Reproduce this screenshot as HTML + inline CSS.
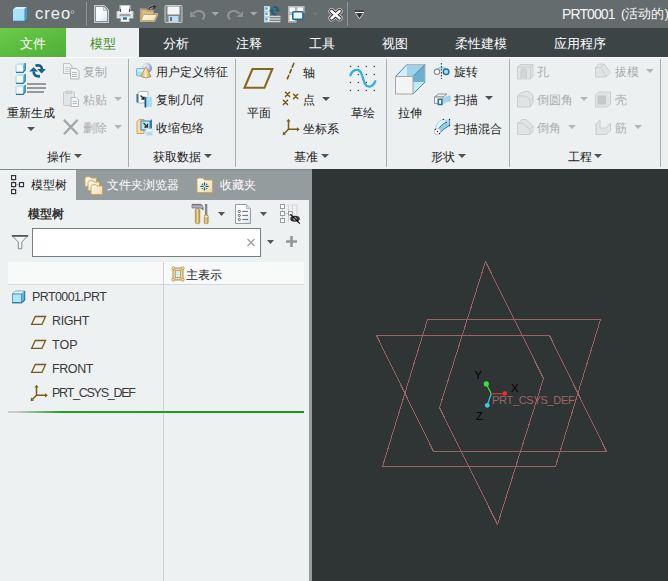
<!DOCTYPE html>
<html><head><meta charset="utf-8">
<style>
*{margin:0;padding:0;box-sizing:border-box}
html,body{width:668px;height:581px;overflow:hidden;background:#2f3535;font-family:"Liberation Sans",sans-serif;position:relative}
.a{position:absolute}
svg{position:absolute;overflow:visible}
#title{left:0;top:0;width:668px;height:28px;background:#656c6d;}
#tabs{left:0;top:28px;width:668px;height:29px;background:#3c4446;}
#ribbon{left:0;top:57px;width:668px;height:112px;background:#edf0f1;border-top:1px solid #fbfcfc;}
.sep{position:absolute;top:59px;width:1px;height:108px;background:#a9aeaf;}
.tab{position:absolute;top:28px;height:29px;color:#fff;font-size:13px;line-height:31px;text-align:center;}
.t{position:absolute;white-space:nowrap;font-size:12px;color:#222;line-height:14px;height:14px}
.dis{color:#a9abac}
.tri{position:absolute;width:0;height:0;border-left:4px solid transparent;border-right:4px solid transparent;border-top:4px solid #505050;}
.tri.d{border-top-color:#b4b6b7}
#hline{left:0;top:169px;width:312px;height:1px;background:#7f8a8b}
#ptabs{left:0;top:170px;width:312px;height:411px;background:#959c9e;}
#panel{left:0;top:200px;width:309px;height:381px;background:#edf1f2;}
#gfx{left:312px;top:170px;width:356px;height:411px;background:#2f3535;}
.tree{position:absolute;font-size:12.5px;color:#3a3a3a;line-height:14px;white-space:nowrap}
</style></head><body>
<!-- title bar -->
<div id="title" class="a"></div>
<div class="a" style="left:562px;top:6px;font-size:14px;color:#f4f6f6;white-space:nowrap;line-height:16px"><span style="letter-spacing:-0.9px">PRT0001</span><span style="position:absolute;left:59px;top:0;font-size:13.2px">(活动的)</span></div>
<!-- tabs -->
<div id="tabs" class="a"></div>
<div class="a" style="left:0;top:28px;width:66px;height:29px;background:linear-gradient(160deg,#6ccb4a 0%,#5bbd3f 50%,#4fae38 100%)"></div>
<div class="a" style="left:66px;top:28px;width:73px;height:29px;background:#edf0f1"></div>
<div class="tab" style="left:0;width:66px;">文件</div>
<div class="tab" style="left:66px;width:73px;color:#3f8a1c">模型</div>
<div class="tab" style="left:139px;width:73px;">分析</div>
<div class="tab" style="left:212px;width:73px;">注释</div>
<div class="tab" style="left:285px;width:73px;">工具</div>
<div class="tab" style="left:358px;width:73px;">视图</div>
<div class="tab" style="left:431px;width:100px;">柔性建模</div>
<div class="tab" style="left:531px;width:97px;">应用程序</div>

<!-- ribbon -->
<div id="ribbon" class="a"></div>
<div class="sep" style="left:128px"></div>
<div class="sep" style="left:235px"></div>
<div class="sep" style="left:386px"></div>
<div class="sep" style="left:509px"></div>
<div class="sep" style="left:660px"></div>

<!-- group 1 -->
<div class="t" style="left:7px;top:106px">重新生成</div>
<div class="tri" style="left:27px;top:127px"></div>
<div class="t dis" style="left:83px;top:65px">复制</div>
<div class="t dis" style="left:83px;top:93px">粘贴</div>
<div class="tri d" style="left:114px;top:97px"></div>
<div class="t dis" style="left:83px;top:121px">删除</div>
<div class="tri d" style="left:114px;top:125px"></div>
<div class="t" style="left:47px;top:150px">操作</div>
<div class="tri" style="left:74px;top:154px"></div>

<!-- group 2 -->
<div class="t" style="left:156px;top:65px">用户定义特征</div>
<div class="t" style="left:156px;top:93px">复制几何</div>
<div class="t" style="left:156px;top:121px">收缩包络</div>
<div class="t" style="left:153px;top:150px">获取数据</div>
<div class="tri" style="left:204px;top:154px"></div>

<!-- group 3 -->
<div class="t" style="left:247px;top:106px">平面</div>
<div class="t" style="left:303px;top:66px">轴</div>
<div class="t" style="left:303px;top:93px">点</div>
<div class="tri" style="left:322px;top:97px"></div>
<div class="t" style="left:303px;top:122px">坐标系</div>
<div class="t" style="left:351px;top:106px">草绘</div>
<div class="t" style="left:294px;top:150px">基准</div>
<div class="tri" style="left:321px;top:154px"></div>

<!-- group 4 -->
<div class="t" style="left:398px;top:106px">拉伸</div>
<div class="t" style="left:454px;top:65px">旋转</div>
<div class="t" style="left:454px;top:93px">扫描</div>
<div class="tri" style="left:485px;top:96px"></div>
<div class="t" style="left:454px;top:122px">扫描混合</div>
<div class="t" style="left:431px;top:150px">形状</div>
<div class="tri" style="left:458px;top:154px"></div>

<!-- group 5 -->
<div class="t dis" style="left:537px;top:65px">孔</div>
<div class="t dis" style="left:537px;top:93px">倒圆角</div>
<div class="tri d" style="left:580px;top:97px"></div>
<div class="t dis" style="left:537px;top:121px">倒角</div>
<div class="tri d" style="left:568px;top:125px"></div>
<div class="t dis" style="left:615px;top:65px">拔模</div>
<div class="tri d" style="left:646px;top:69px"></div>
<div class="t dis" style="left:615px;top:93px">壳</div>
<div class="t dis" style="left:615px;top:121px">筋</div>
<div class="tri d" style="left:634px;top:125px"></div>
<div class="t" style="left:568px;top:150px">工程</div>
<div class="tri" style="left:594px;top:154px"></div>

<!-- left panel -->
<div id="hline" class="a"></div>
<div id="ptabs" class="a"></div>
<div class="a" style="left:0;top:170px;width:76px;height:30px;background:#edf1f2"></div>
<div id="panel" class="a"></div>
<div class="t" style="left:31px;top:178px;font-size:12px;color:#222">模型树</div>
<div class="t" style="left:107px;top:178px;font-size:12px;color:#fff">文件夹浏览器</div>
<div class="t" style="left:220px;top:178px;font-size:12px;color:#fff">收藏夹</div>
<div class="t" style="left:28px;top:207px;font-size:12px;color:#333;font-weight:bold">模型树</div>
<div class="a" style="left:32px;top:228px;width:229px;height:29px;background:#fff;border:1px solid #778081"></div>

<div class="a" style="left:8px;top:262px;width:296px;height:23px;background:#f8f9f9;border-bottom:1px solid #d5d8d9"></div>
<div class="a" style="left:163px;top:262px;width:1px;height:319px;background:#cfd3d4"></div>
<div class="t" style="left:186px;top:268px;font-size:12px;color:#222">主表示</div>

<div class="tree" style="left:32px;top:290px;letter-spacing:-0.6px">PRT0001.PRT</div>
<div class="tree" style="left:52px;top:314px;letter-spacing:-0.4px">RIGHT</div>
<div class="tree" style="left:52px;top:338px">TOP</div>
<div class="tree" style="left:52px;top:362px;letter-spacing:-0.4px">FRONT</div>
<div class="tree" style="left:52px;top:386px;letter-spacing:-1.25px">PRT_CSYS_DEF</div>
<div class="a" style="left:8px;top:411px;width:296px;height:2px;background:linear-gradient(90deg,#c9c9c9 0%,#c9c9c9 3%,#24a024 18%,#1a961a 100%)"></div>

<!-- graphics -->
<div id="gfx" class="a"></div>

<svg width="668" height="581" style="left:0;top:0" viewBox="0 0 668 581">
<defs>
<linearGradient id="gDoc" x1="0" y1="0" x2="1" y2="1"><stop offset="0" stop-color="#ffffff"/><stop offset="0.6" stop-color="#f4f8fa"/><stop offset="1" stop-color="#cfe3ee"/></linearGradient>
<linearGradient id="gFold" x1="0" y1="0" x2="1" y2="1"><stop offset="0" stop-color="#fffdf6"/><stop offset="1" stop-color="#f2d9a4"/></linearGradient>
<linearGradient id="gTan" x1="0" y1="0" x2="1" y2="0"><stop offset="0" stop-color="#b88f3c"/><stop offset="0.45" stop-color="#f0d890"/><stop offset="1" stop-color="#b08838"/></linearGradient>
<linearGradient id="gSteel" x1="0" y1="0" x2="0" y2="1"><stop offset="0" stop-color="#6a6c74"/><stop offset="0.45" stop-color="#c4c5cc"/><stop offset="1" stop-color="#50525a"/></linearGradient>
<radialGradient id="gSph" cx="0.35" cy="0.35" r="0.7"><stop offset="0" stop-color="#ffffff"/><stop offset="0.5" stop-color="#c4c8f0"/><stop offset="1" stop-color="#7f88cc"/></radialGradient>
<linearGradient id="gCone" x1="0" y1="0" x2="1" y2="0"><stop offset="0" stop-color="#c8a860"/><stop offset="0.45" stop-color="#fbeac0"/><stop offset="1" stop-color="#c09a50"/></linearGradient>
</defs>

<!-- ===== TITLE BAR ===== -->
<!-- creo cube -->
<g>
<polygon points="13.5,9 16,7 27,7 24.5,9" fill="#d8f2fb"/>
<polygon points="24.5,9 27,7 27,19 24.5,21" fill="#3a9ccc"/>
<rect x="13" y="9" width="11.5" height="12" fill="#a9e1f6"/>
<path d="M13 21.2 H24.5 L27 19" stroke="#2c86b6" stroke-width="1" fill="none"/>
</g>
<text x="35" y="19" font-family="Liberation Sans" font-size="16.5" fill="#f2f4f4" letter-spacing="1">creo</text>
<circle cx="72.5" cy="12" r="1.5" fill="none" stroke="#c8cccc" stroke-width="0.7"/>
<rect x="86" y="2" width="1" height="24" fill="#8d9394"/>

<!-- new -->
<path d="M94.5 5.5 H104.5 L108.5 9.5 V22.5 H94.5 Z" fill="#8a9091" stroke="#c9cccc" stroke-width="1"/>
<path d="M96 7 H103.8 L107 10.2 V21 H96 Z" fill="url(#gDoc)"/>
<path d="M103.5 7 V10.5 H107" fill="#cfe6f0" stroke="#9fb8c4" stroke-width="0.8"/>
<!-- print -->
<g>
<path d="M119.5 5 H130.5 V11 H133.5 V18.5 H129.5 V22 H120.5 V18.5 H116.5 V11 H119.5 Z" fill="#c4c8c8"/>
<rect x="117.5" y="11.5" width="15" height="6.5" fill="#e6e8e8"/>
<rect x="121" y="6" width="8" height="6" fill="#ffffff"/>
<path d="M120.6 9 V12 M129.4 9 V12" stroke="#2e3233" stroke-width="0.9"/>
<rect x="118" y="12.2" width="14" height="1.6" fill="#f4f4f4"/>
<rect x="119.5" y="13.8" width="11" height="2.4" fill="#a3a6a7"/>
<rect x="118" y="16.2" width="14" height="0.9" fill="#b9dcec"/>
<rect x="121.5" y="17" width="7" height="4.3" fill="#ffffff"/>
<rect x="123" y="17.3" width="4" height="2.4" fill="#1f6d9c"/>
</g>
<!-- open folder -->
<g>
<path d="M140.5 9 H145.5 L147 10.5 H153 V13.5 H157.5 V15 L154.5 21.5 H140.5 Z" fill="none" stroke="#aeb3b3" stroke-width="1.2"/>
<path d="M141 9.5 H145.5 L147 11 H153.5 V20.8 H141 Z" fill="#dcbb78" stroke="#b8944c" stroke-width="0.9"/>
<path d="M143.5 14.5 H157 L154.3 20.8 H141 Z" fill="url(#gFold)" stroke="#c49e55" stroke-width="0.9"/>
<path d="M148.8 9.5 Q149.5 6.3 153.5 6.8" stroke="#c6caca" stroke-width="2.6" fill="none"/>
<path d="M148.8 9.5 Q149.5 6.3 153.5 6.8" stroke="#2b3236" stroke-width="1.4" fill="none"/>
<polygon points="153,5 156.6,6.2 153.5,9.6" fill="#2b3236"/>
</g>
<!-- save -->
<g>
<rect x="165" y="5.5" width="17" height="17" rx="1" fill="#7e8384" stroke="#c4c8c8" stroke-width="1"/>
<rect x="167.5" y="6.5" width="12" height="8" fill="#f4f4f4"/>
<rect x="168.5" y="16" width="10" height="6" fill="#b8dff0"/>
<rect x="170" y="17" width="2" height="4" fill="#6d7476"/>
</g>
<!-- undo -->
<path d="M193 13.5 Q198 9 203 12.5 Q206 16 202.5 19.5" stroke="#8d9293" stroke-width="2.2" fill="none"/>
<polygon points="190,11 196.5,17 190,17" fill="#8d9293"/>
<polygon points="211.5,12 219,12 215.25,15.8" fill="#a4a9aa"/>
<!-- redo -->
<path d="M239.5 13.5 Q234.5 9 229.5 12.5 Q226.5 16 230 19.5" stroke="#8d9293" stroke-width="2.2" fill="none"/>
<polygon points="243,11 236.5,17 243,17" fill="#8d9293"/>
<polygon points="250,12 257.5,12 253.75,15.8" fill="#a4a9aa"/>
<!-- regen small -->
<g>
<rect x="264.5" y="6.5" width="5" height="4.6" fill="#fff" stroke="#c8cccc" stroke-width="1"/>
<rect x="264.5" y="11.9" width="5" height="4.6" fill="#fff" stroke="#c8cccc" stroke-width="1"/>
<rect x="264.5" y="17.3" width="5" height="4.6" fill="#fff" stroke="#c8cccc" stroke-width="1"/>
<rect x="265.3" y="7.3" width="2.4" height="2.4" fill="#2ea8e8"/>
<rect x="265.3" y="12.7" width="2.4" height="2.4" fill="#2ea8e8"/>
<rect x="265.3" y="18.1" width="2.4" height="2.4" fill="#2ea8e8"/>
<path d="M270 16.5 H280.5 M270 19 H280.5 M270 21.5 H280.5" stroke="#d4d8d8" stroke-width="1.3"/>
<g transform="translate(249.14,-37.46) scale(0.68)">
<path d="M35.5 65.6 Q42 64.2 41.9 69.5" stroke="#14628a" stroke-width="2.9" fill="none"/>
<polygon points="37.2,69 46,69 41.6,73.4" fill="#14628a"/>
<path d="M40 76.2 Q33.6 77 33.7 71.5" stroke="#14628a" stroke-width="2.9" fill="none"/>
<polygon points="29.2,71.6 38,71.6 33.6,67.2" fill="#14628a"/>
</g>
</g>
<!-- windows -->
<g>
<path d="M288 6 H304.5 V13 H296.5 V22.5 H288 Z" fill="#c6caca"/>
<rect x="289" y="7" width="6.5" height="5.5" fill="#f6f6f6" stroke="#8e9293" stroke-width="0.6"/>
<rect x="297" y="7" width="6.5" height="5.5" fill="#f6f6f6" stroke="#8e9293" stroke-width="0.6"/>
<rect x="289" y="14.5" width="6.5" height="7" fill="#f6f6f6" stroke="#8e9293" stroke-width="0.6"/>
<rect x="292.8" y="11.8" width="10.2" height="7.6" rx="1.2" fill="#eef4f7" stroke="#1c6c98" stroke-width="1.6"/>
</g>
<polygon points="312,12.7 318.6,12.7 315.3,15.7" fill="#727879"/>
<!-- close x -->
<path d="M331.5 11.2 L339.5 18.2 M339.5 11.2 L331.5 18.2" stroke="#d0d2cc" stroke-width="6.2" stroke-linecap="round"/>
<path d="M331.5 11.2 L339.5 18.2 M339.5 11.2 L331.5 18.2" stroke="#252525" stroke-width="4.6" stroke-linecap="round"/>
<path d="M331.5 11.2 L339.5 18.2 M339.5 11.2 L331.5 18.2" stroke="#ffffff" stroke-width="2.8" stroke-linecap="round"/>
<rect x="347" y="2" width="1" height="24" fill="#8d9394"/>
<rect x="355" y="10.5" width="9" height="1.2" fill="#2e2e2e"/>
<rect x="355" y="12" width="9" height="1.3" fill="#ffffff"/>
<polygon points="356,13.3 363,13.3 359.5,18.2" fill="#2e2e2e"/>
<path d="M356 14 L359.5 18.8 L363 14" stroke="#dcdede" stroke-width="0.9" fill="none"/>

<!-- ===== RIBBON ICONS ===== -->
<!-- regenerate big -->
<g>
<polygon points="16,65 18,63 25,63 23,65" fill="#b4e6f8"/>
<polygon points="23,65 25,63 25,70 23,72" fill="#6fbde2"/>
<rect x="16" y="65" width="7" height="7" fill="#effaff"/>
<path d="M16 65 V72" stroke="#b6babb" stroke-width="0.8"/>
<path d="M16 72.3 H23 L25.2 70 V63" stroke="#1d79ad" stroke-width="1.2" fill="none"/>
</g>
<g transform="translate(0,11)">
<polygon points="16,65 18,63 25,63 23,65" fill="#b4e6f8"/>
<polygon points="23,65 25,63 25,70 23,72" fill="#6fbde2"/>
<rect x="16" y="65" width="7" height="7" fill="#effaff"/>
<path d="M16 65 V72" stroke="#b6babb" stroke-width="0.8"/>
<path d="M16 72.3 H23 L25.2 70 V63" stroke="#1d79ad" stroke-width="1.2" fill="none"/>
</g>
<g transform="translate(0,22)">
<polygon points="16,65 18,63 25,63 23,65" fill="#b4e6f8"/>
<polygon points="23,65 25,63 25,70 23,72" fill="#6fbde2"/>
<rect x="16" y="65" width="7" height="7" fill="#effaff"/>
<path d="M16 65 V72" stroke="#b6babb" stroke-width="0.8"/>
<path d="M16 72.3 H23 L25.2 70 V63" stroke="#1d79ad" stroke-width="1.2" fill="none"/>
</g>
<path d="M35.5 65.6 Q42 64.2 41.9 69.5" stroke="#14628a" stroke-width="2.7" fill="none"/>
<polygon points="37.2,69 46,69 41.6,73.4" fill="#14628a"/>
<path d="M40 76.2 Q33.6 77 33.7 71.5" stroke="#14628a" stroke-width="2.7" fill="none"/>
<polygon points="29.2,71.6 38,71.6 33.6,67.2" fill="#14628a"/>
<rect x="27" y="83" width="19" height="2" fill="#989898"/>
<rect x="27" y="87" width="19" height="2" fill="#989898"/>
<rect x="27" y="91" width="17" height="2" fill="#989898"/>

<!-- copy (disabled) -->
<path d="M63.5 63.5 H69.5 L72 66 V73.5 H63.5 Z" fill="#f1f2f2" stroke="#c0c2c2" stroke-width="1"/>
<path d="M65 67.5 H70 M65 69.5 H70 M65 71.5 H70" stroke="#c4c6c6" stroke-width="0.8"/>
<path d="M70.5 68.5 H76.5 L79 71 V79 H70.5 Z" fill="#f4f5f5" stroke="#b6b8b8" stroke-width="1"/>
<path d="M72 72.5 H77 M72 74.5 H77 M72 76.5 H77" stroke="#b4b6b6" stroke-width="0.9"/>
<!-- paste -->
<rect x="63.5" y="92" width="11" height="13.5" rx="1" fill="#e4e5e5" stroke="#c8caca" stroke-width="1"/>
<rect x="66.5" y="91" width="5" height="2.5" fill="#d6d8d8" stroke="#c4c6c6" stroke-width="0.8"/>
<path d="M71 97.5 H76 L78.5 100 V106.5 H71 Z" fill="#f6f7f7" stroke="#b6b8b8" stroke-width="1"/>
<path d="M72.5 101.5 H77 M72.5 103.5 H77" stroke="#b4b6b6" stroke-width="0.9"/>
<!-- delete -->
<path d="M64.5 120.5 L77 133.5 M77 120.5 L64.5 133.5" stroke="#a3a5a6" stroke-width="2.3" stroke-linecap="round"/>

<!-- UDF -->
<circle cx="147" cy="68" r="5" fill="url(#gSph)"/>
<rect x="136.5" y="68.5" width="8.5" height="7.5" rx="1" fill="#a5ddf4" stroke="#7ab8d4" stroke-width="1"/>
<rect x="137.5" y="69.5" width="6.5" height="2" fill="#e6f7fd"/>
<path d="M145.8 66.5 L151 76.5 Q146 79.5 141 76.5 Z" fill="url(#gCone)" stroke="#b8954e" stroke-width="0.9"/>
<!-- copy geom -->
<path d="M138 93.5 L140 91.5 H148 V101 L146 103 H138 Z" fill="#ffffff" stroke="#aeb2b3" stroke-width="1"/>
<rect x="136.5" y="94" width="1.8" height="8.5" fill="#336f8e"/>
<path d="M140.5 95.5 L144 99 M144 96.5 V99.2 H141.3" stroke="#222" stroke-width="1.2" fill="none"/>
<polygon points="145,97 147,95.5 152,95.5 152,97" fill="#d6f0fb"/>
<rect x="145" y="97" width="7" height="10" fill="#a8def5"/>
<rect x="144.5" y="97" width="1.8" height="10.5" fill="#155f84"/>
<!-- shrinkwrap -->
<path d="M137 121.5 L139 119.5 H144 V133.5 H137 Z" fill="#f6dfaa" stroke="#c9a760" stroke-width="1"/>
<rect x="141" y="121" width="9" height="9" fill="#bfe8f7" stroke="#2f7ea8" stroke-width="1"/>
<path d="M150 121 L152 119 V128 L150 130" fill="#2f7ea8"/>
<path d="M143.5 123 L147.2 126.7 M147.5 123.8 V127 H144.3" stroke="#333" stroke-width="1.3" fill="none"/>
<rect x="146" y="129" width="6" height="6" fill="#ffffff" stroke="#b4dcef" stroke-width="0.8"/>
<rect x="146.5" y="131.5" width="5.5" height="3.5" fill="#a9dcf2"/>

<!-- plane -->
<path d="M252.5 69 H272.3 L264.5 87.8 H244.5 Z" fill="none" stroke="#87671f" stroke-width="2.1" stroke-linejoin="miter"/>
<!-- axis -->
<path d="M293.8 63.5 L292.3 67 M291.3 69.5 L289.9 72.8 M288.8 75.5 L287.4 78.7" stroke="#7a5a18" stroke-width="1.7" stroke-linecap="round"/>
<!-- point -->
<g stroke="#7a5a18" stroke-width="1.5" stroke-linecap="round">
<path d="M285.5 92.3 L289.6 96.6 M289.6 92.3 L285.5 96.6"/>
<path d="M293.6 94.3 L297.7 98.6 M297.7 94.3 L293.6 98.6"/>
<path d="M283.4 100.3 L287.5 104.6 M287.5 100.3 L283.4 104.6"/>
</g>
<!-- csys -->
<g>
<path d="M288.5 121 V129.3 H297.5 M288.5 129.3 L284.5 133.3" stroke="#7a5a18" stroke-width="1.5" fill="none"/>
<polygon points="286.4,121.6 288.5,118.8 290.6,121.6" fill="#7a5a18"/>
<polygon points="297,127.2 299.8,129.3 297,131.4" fill="#7a5a18"/>
<polygon points="283,131.5 286,134.6 282.7,135.2" fill="#7a5a18"/>
</g>
<!-- sketch -->
<g fill="#3d3d3d">
<circle cx="350.5" cy="66.4" r="0.75"/><circle cx="358.4" cy="66.4" r="0.75"/><circle cx="366.4" cy="66.4" r="0.75"/><circle cx="374.4" cy="66.4" r="0.75"/>
<circle cx="358.4" cy="74.4" r="0.75"/><circle cx="366.4" cy="74.4" r="0.75"/><circle cx="374.4" cy="74.4" r="0.75"/>
<circle cx="350.5" cy="82.4" r="0.75"/><circle cx="358.4" cy="82.4" r="0.75"/><circle cx="366.4" cy="82.4" r="0.75"/>
<circle cx="350.5" cy="90.4" r="0.75"/><circle cx="358.4" cy="90.4" r="0.75"/><circle cx="366.4" cy="90.4" r="0.75"/><circle cx="374.4" cy="90.4" r="0.75"/>
</g>
<path d="M350.4 75.2 C353 69 359.5 67.5 361.8 74.5 L364 81.5 C366 88.5 372.5 88 375.3 81.3" stroke="#34ace0" stroke-width="2.3" fill="none" stroke-linecap="round"/>

<!-- extrude -->
<polygon points="395.5,76.5 407,64.5 407,76.5" fill="#d2effb"/>
<polygon points="407,64.5 425,64.5 413,76.5 407,76.5" fill="#9dd2ea"/>
<polygon points="413,76.5 425,64.5 425,82 413,82" fill="#6cb0cf"/>
<polygon points="413,82 425,82 413,94" fill="#c6e9f8"/>
<path d="M407 64.5 H425 V82" stroke="#b4b4b4" stroke-width="1" fill="none"/>
<path d="M395.5 76.5 L407 64.5 M413 76.5 L425 64.5 M413 94 L425 82" stroke="#2a80ae" stroke-width="0.9"/>
<rect x="395.5" y="76.5" width="17.5" height="17.5" fill="#f4f4f4" stroke="#a6a6a6" stroke-width="1"/>
<!-- revolve -->
<path d="M436 70.2 Q441.5 65.2 447 70.2" stroke="#9fd4ec" stroke-width="2.2" fill="none"/>
<circle cx="437" cy="71.8" r="2.7" fill="#ffffff" stroke="#8a8a8a" stroke-width="1.1"/>
<circle cx="446.1" cy="71.8" r="2.8" fill="#a6def6" stroke="#1b72a3" stroke-width="1.4"/>
<path d="M441.4 63 V79" stroke="#2e2e2e" stroke-width="1" stroke-dasharray="1.6 1.4"/>
<!-- sweep -->
<path d="M434.5 97 L438.5 94 H447 L443 97 Z" fill="#f0f0f0" stroke="#8c8c8c" stroke-width="0.9"/>
<rect x="434.5" y="97" width="8.5" height="6.3" fill="#f4f4f4" stroke="#8c8c8c" stroke-width="0.9"/>
<path d="M441.8 99.2 L446 96.3 L450 95.6 V101.6 L446 102.6 L441.8 104.8 Z" fill="#a3d5ec"/>
<path d="M450 95.6 V101.6" stroke="#7fbcdc" stroke-width="0.8"/>
<rect x="438.3" y="99.3" width="3.6" height="5.2" fill="#ffffff" stroke="#256f9c" stroke-width="1.5"/>
<!-- swept blend -->
<path d="M435.3 129.4 Q436.5 121.5 443.4 119.4 L446.3 122.4 Q440.5 124.5 437.4 131.5 Z" fill="#dff3fc"/>
<path d="M437.4 131.5 Q440.5 124.5 446.3 122.4 L449.5 125.5 Q443.5 128.5 439.5 133.4 Z" fill="#98cde6"/>
<path d="M443.4 119.4 H449.5 V125.5 L446.3 122.4 Z" fill="#b5def1"/>
<path d="M449.5 119.4 V125.5" stroke="#4d9ccb" stroke-width="1.2"/>
<path d="M435.3 129.4 Q436.5 121.5 443.4 119.4" stroke="#6cb4da" stroke-width="0.9" fill="none" stroke-dasharray="1.2 0.8"/>
<path d="M437.4 131.5 Q440.5 124.5 446.3 122.4 M439.5 133.4 Q443.5 128.5 449.5 125.5" stroke="#2a82b6" stroke-width="1" fill="none"/>
<circle cx="437.4" cy="131.5" r="3.3" fill="#f4f4f4" stroke="#b4b4b4" stroke-width="0.8"/>
<g fill="#2e2e2e"><circle cx="437.4" cy="131.5" r="0.65"/><circle cx="435.3" cy="129.4" r="0.65"/><circle cx="439.5" cy="133.4" r="0.65"/><circle cx="443.4" cy="119.4" r="0.65"/><circle cx="449.5" cy="119.4" r="0.65"/><circle cx="449.5" cy="125.5" r="0.65"/><circle cx="446.3" cy="122.4" r="0.65"/></g>

<!-- engineering (disabled) -->
<g stroke="#c9cbcc" stroke-width="0.9" fill="#e2e4e4">
<path d="M517.5 67 L520 64.5 H533 V76.5 L530.5 79 H517.5 Z"/>
<path d="M517.5 67 H530.5 L533 64.5 M530.5 67 V79" fill="none"/>
<path d="M521 78.5 V71 Q521 68.5 523.7 68.5 Q526.5 68.5 526.5 71 V78.5" fill="#d4d6d6"/>
<!-- round -->
<path d="M517.5 96 Q521 91.5 525 91.5 H528 Q533 93 533 97.5 V103 L530 107 H517.5 Z"/>
<path d="M517.5 96 H523 Q529 96.5 530 101 V107 M530 101 L533 97.5" fill="none"/>
<!-- chamfer -->
<path d="M517.5 123.5 L522 119.5 H526 L533 126 V131 L530 134.5 H517.5 Z"/>
<path d="M517.5 123.5 H523 L530 129.5 V134.5 M530 129.5 L533 126" fill="none"/>
<!-- draft -->
<path d="M595.5 67.5 L598.5 64 H604 L610.5 72.5 L606 77 H595.5 Z"/>
<path d="M595.5 67.5 H601 L606 77 M601 67.5 L604 64" fill="none"/>
<!-- shell -->
<path d="M595.5 95 L598.5 92 H610.5 V104 L607.5 107 H595.5 Z"/>
<rect x="598" y="96" width="7.5" height="8" fill="#c8caca" stroke="#c0c2c2"/>
<!-- rib -->
<path d="M596 124 L600 120 V128 H606 L610.5 123 V131 L606 134.5 H596 Z"/>
<path d="M596 124 V134.5 M596 134.5" fill="none" stroke-dasharray="1 1"/>
</g>

<!-- ===== LEFT PANEL ===== -->
<!-- model tree tab icon -->
<g fill="#ffffff" stroke="#333" stroke-width="1.2">
<rect x="11.6" y="175.6" width="4" height="4"/>
<rect x="11.6" y="182.6" width="4" height="4"/>
<rect x="11.6" y="189.6" width="4" height="4"/>
<rect x="19.5" y="182.6" width="4" height="4"/>
</g>
<path d="M13.6 180.2 V182 M13.6 187.2 V189 M16.2 184.6 H19" stroke="#888" stroke-width="0.8"/>
<!-- folders -->
<g stroke="#c6a45a" stroke-width="0.9" fill="url(#gFold)">
<path d="M85 178.5 Q85 176.8 87 176.8 H90 L91 178 H96.5 V186.5 H85 Z"/>
<path d="M88 182.5 Q88 180.8 90 180.8 H93 L94 182 H99.5 V190.5 H88 Z"/>
<path d="M91 186.5 Q91 184.8 93 184.8 H96 L97 186 H102.5 V194.5 H91 Z"/>
</g>
<!-- favorites folder -->
<path d="M197 179.5 Q197 178 199 178 H203 L204.5 180 H212.5 V192.5 H197 Z" fill="url(#gFold)" stroke="#c6a45a" stroke-width="0.9"/>
<g stroke="#14628a" stroke-width="1.3" stroke-linecap="round">
<path d="M204.5 182.8 V190 M200.9 186.4 H208.1"/>
</g>
<g fill="#14628a"><circle cx="202.3" cy="184.2" r="0.7"/><circle cx="206.7" cy="184.2" r="0.7"/><circle cx="202.3" cy="188.6" r="0.7"/><circle cx="206.7" cy="188.6" r="0.7"/></g>
<circle cx="204.5" cy="186.4" r="1" fill="#fff"/>

<!-- tools hammer -->
<rect x="195.3" y="208.5" width="4.6" height="15.2" rx="1.6" fill="url(#gTan)" stroke="#a8883c" stroke-width="0.6"/>
<path d="M192.2 204.3 H200.5 Q203.5 205 203.2 210 Q201.5 207.8 199.5 208 H192.2 Q191.5 206.2 192.2 204.3 Z" fill="url(#gSteel)" stroke="#5c5e66" stroke-width="0.6"/>
<rect x="205.2" y="204.3" width="1.8" height="11" fill="#8c8e96" stroke="#6a6c74" stroke-width="0.5"/>
<rect x="204.2" y="215" width="4" height="8.7" rx="1.2" fill="url(#gTan)" stroke="#a8883c" stroke-width="0.6"/>
<rect x="204.4" y="216.3" width="3.6" height="0.8" fill="#fff3c8"/>
<polygon points="218,212 225,212 221.5,216" fill="#555"/>
<!-- list doc -->
<path d="M235.5 204.5 H246.5 L250.5 208.5 V223.5 H235.5 Z" fill="url(#gDoc)" stroke="#9a9a9a" stroke-width="1"/>
<path d="M246.5 204.5 V208.5 H250.5" fill="#cfe6f0" stroke="#9fb8c4" stroke-width="0.8"/>
<g fill="none" stroke="#555" stroke-width="0.9">
<circle cx="239.3" cy="211.4" r="1.1"/><circle cx="239.3" cy="215.4" r="1.1"/><circle cx="239.3" cy="219.5" r="1.1"/>
</g>
<path d="M242.3 211.4 H248 M242.3 215.4 H248 M242.3 219.5 H248" stroke="#6a6a6a" stroke-width="1"/>
<polygon points="260,212 267,212 263.5,216" fill="#555"/>
<!-- tree hide -->
<g fill="#fff" stroke="#9a9a9a" stroke-width="1">
<rect x="280.5" y="204.5" width="4" height="4"/>
<rect x="280.5" y="211.5" width="4" height="4"/>
<rect x="280.5" y="218.5" width="4" height="4"/>
<rect x="288.5" y="211.5" width="3.8" height="3.8"/>
</g>
<path d="M282.5 209 V211 M282.5 216 V218 M285 213.5 H288 M286.5 205 H288.5 V211 M290 205 H292.5 V210 M293.5 205 H297 V215 M288.5 216 V222" stroke="#c8c8c8" stroke-width="0.8" fill="none"/>
<ellipse cx="295" cy="218.8" rx="4.8" ry="3" fill="#333"/>
<circle cx="295" cy="218.8" r="1.6" fill="#e0e0e0"/>
<path d="M290.4 214.2 L299.8 223.6" stroke="#000" stroke-width="1.1"/>

<!-- filter -->
<path d="M12 235.5 H28 L21.8 242 V248.8 H18.3 V242 Z" fill="#f4f4f4" stroke="#7a7a7a" stroke-width="0.9"/>
<rect x="12" y="235" width="16" height="1.8" fill="#555"/>
<!-- search x -->
<path d="M247.5 239 L254.5 246 M254.5 239 L247.5 246" stroke="#9c9c9c" stroke-width="1.2"/>
<polygon points="267,240 274,240 270.5,244" fill="#555"/>
<path d="M286 241.5 H297 M291.5 236 V247" stroke="#969696" stroke-width="2.6"/>

<!-- header icon -->
<rect x="173" y="268" width="10" height="12" fill="#f0dcaa" stroke="#b58e45" stroke-width="1"/>
<rect x="175.3" y="270.3" width="5.4" height="7.4" fill="#cdeefb" stroke="#b58e45" stroke-width="0.8"/>
<g fill="#f6e4b8" stroke="#b58e45" stroke-width="0.8"><circle cx="173.3" cy="268.3" r="1.5"/><circle cx="182.7" cy="268.3" r="1.5"/><circle cx="173.3" cy="279.7" r="1.5"/><circle cx="182.7" cy="279.7" r="1.5"/></g>

<!-- tree cube -->
<polygon points="12.5,294 15.5,291 24.5,291 21.5,294" fill="#ffffff" stroke="#4a98c4" stroke-width="0.8"/>
<polygon points="21.5,294 24.5,291 24.5,300 21.5,303" fill="#58b4e0"/>
<rect x="12.5" y="294" width="9" height="8.8" fill="#b0e6f9" stroke="#4a98c4" stroke-width="0.9"/>
<path d="M12 302.8 H21.8 L24.7 300 V291" stroke="#236f9b" stroke-width="1.1" fill="none"/>
<!-- tree planes -->
<path d="M35.3 316.5 H45.5 L42 324.3 H31.6 Z" fill="none" stroke="#7a5818" stroke-width="1.3"/>
<path d="M35.3 340.5 H45.5 L42 348.3 H31.6 Z" fill="none" stroke="#7a5818" stroke-width="1.3"/>
<path d="M35.3 364.5 H45.5 L42 372.3 H31.6 Z" fill="none" stroke="#7a5818" stroke-width="1.3"/>
<g transform="translate(-252,266)">
<path d="M288.5 121 V129.3 H297.5 M288.5 129.3 L284.5 133.3" stroke="#7a5a18" stroke-width="1.5" fill="none"/>
<polygon points="286.4,121.6 288.5,118.8 290.6,121.6" fill="#7a5a18"/>
<polygon points="297,127.2 299.8,129.3 297,131.4" fill="#7a5a18"/>
<polygon points="283,131.5 286,134.6 282.7,135.2" fill="#7a5a18"/>
</g>

<!-- ===== GRAPHICS ===== -->
<g fill="none" stroke="#9a6262" stroke-width="1" stroke-linejoin="bevel" shape-rendering="crispEdges">
<path d="M427.5 319.5 H600.5 L555.5 466.5 H382.5 Z"/>
<path d="M376.5 335.5 H549.5 L606.5 451.5 H433.5 Z"/>
<path d="M485.5 261.5 L543.5 378.5 L497.5 524.5 L439.5 407.5 Z"/>
</g>
<text x="492" y="404" font-family="Liberation Sans" font-size="11" fill="#9c6666" letter-spacing="-0.3">PRT_CSYS_DEF</text>
<path d="M491.2 393.7 L486.3 383.9" stroke="#40e040" stroke-width="1.2"/>
<path d="M491.2 393.7 H504.8" stroke="#e03030" stroke-width="1.2"/>
<path d="M491.2 393.7 L487.3 405.3" stroke="#30c8e0" stroke-width="1.2"/>
<circle cx="486.3" cy="383.9" r="2.6" fill="#3ce23c"/>
<circle cx="504.8" cy="393.5" r="2.3" fill="#e23232"/>
<circle cx="487.3" cy="405.3" r="2.4" fill="#30d0f0"/>
<text x="474.5" y="379" font-family="Liberation Sans" font-size="11" fill="#000">Y</text>
<text x="511" y="391.5" font-family="Liberation Sans" font-size="11" fill="#000">X</text>
<text x="476" y="420" font-family="Liberation Sans" font-size="11" fill="#000">Z</text>
</svg>

</body></html>
